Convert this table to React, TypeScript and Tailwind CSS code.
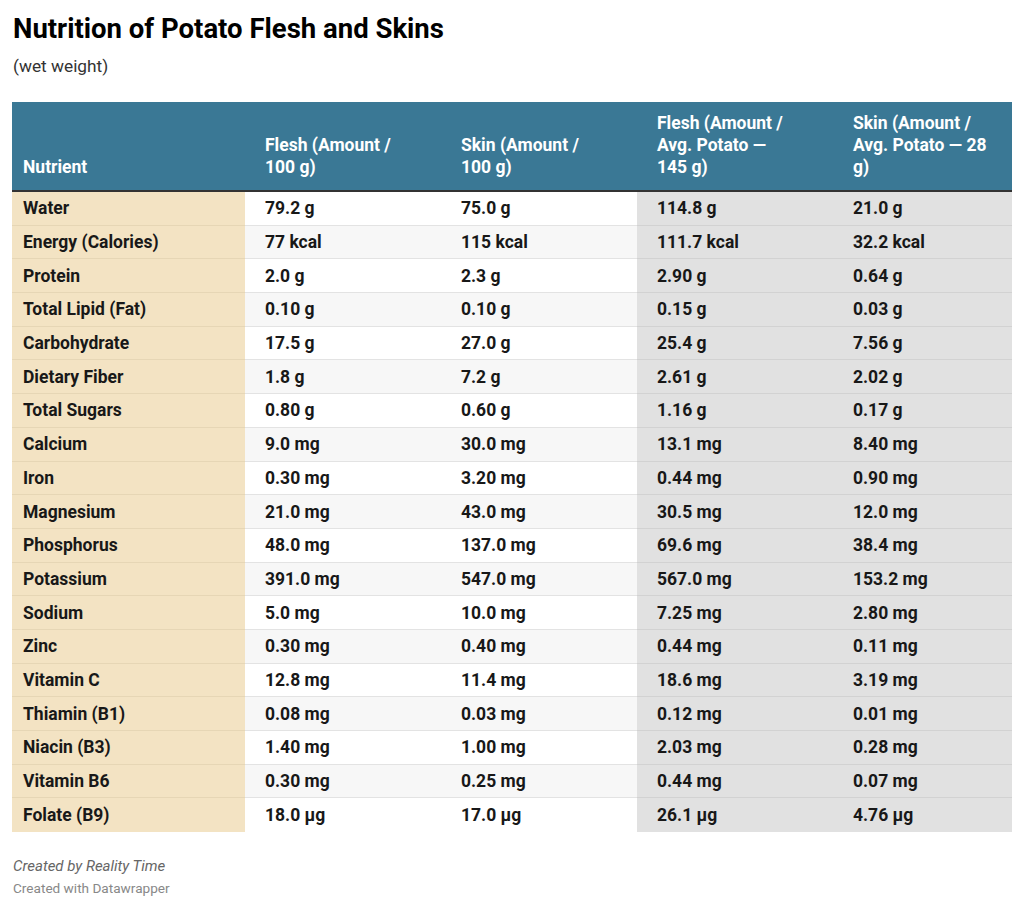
const rows: [string, string, string, string, string][] = [
  ["Water", "79.2 g", "75.0 g", "114.8 g", "21.0 g"],
  ["Energy (Calories)", "77 kcal", "115 kcal", "111.7 kcal", "32.2 kcal"],
  ["Protein", "2.0 g", "2.3 g", "2.90 g", "0.64 g"],
  ["Total Lipid (Fat)", "0.10 g", "0.10 g", "0.15 g", "0.03 g"],
  ["Carbohydrate", "17.5 g", "27.0 g", "25.4 g", "7.56 g"],
  ["Dietary Fiber", "1.8 g", "7.2 g", "2.61 g", "2.02 g"],
  ["Total Sugars", "0.80 g", "0.60 g", "1.16 g", "0.17 g"],
  ["Calcium", "9.0 mg", "30.0 mg", "13.1 mg", "8.40 mg"],
  ["Iron", "0.30 mg", "3.20 mg", "0.44 mg", "0.90 mg"],
  ["Magnesium", "21.0 mg", "43.0 mg", "30.5 mg", "12.0 mg"],
  ["Phosphorus", "48.0 mg", "137.0 mg", "69.6 mg", "38.4 mg"],
  ["Potassium", "391.0 mg", "547.0 mg", "567.0 mg", "153.2 mg"],
  ["Sodium", "5.0 mg", "10.0 mg", "7.25 mg", "2.80 mg"],
  ["Zinc", "0.30 mg", "0.40 mg", "0.44 mg", "0.11 mg"],
  ["Vitamin C", "12.8 mg", "11.4 mg", "18.6 mg", "3.19 mg"],
  ["Thiamin (B1)", "0.08 mg", "0.03 mg", "0.12 mg", "0.01 mg"],
  ["Niacin (B3)", "1.40 mg", "1.00 mg", "2.03 mg", "0.28 mg"],
  ["Vitamin B6", "0.30 mg", "0.25 mg", "0.44 mg", "0.07 mg"],
  ["Folate (B9)", "18.0 µg", "17.0 µg", "26.1 µg", "4.76 µg"],
];

const cols = "grid grid-cols-[233px_196px_196px_196px_179px]";

export default function App() {
  return (
    <div className="min-h-[909px] bg-white px-3 pt-[13px] text-[#181818]" style={{ fontFamily: "Roboto, 'Liberation Sans', sans-serif" }}>
      <h1 className="pl-px text-[27.5px] font-bold leading-[32px] text-black">Nutrition of Potato Flesh and Skins</h1>
      <p className="mt-[10px] pl-px text-[17.3px] leading-[22px] text-[#333]">(wet weight)</p>

      <div className="mt-[25px] w-[1000px]">
        <div className={`${cols} h-[90px] items-end border-b-2 border-[#333] bg-[#3a7895] text-[17.5px] font-bold leading-[22px] text-white`}>
          <div className="pb-[12px] pl-[11px]">Nutrient</div>
          <div className="pb-[12px] pl-5 pr-8">Flesh (Amount / 100 g)</div>
          <div className="pb-[12px] pl-5 pr-8">Skin (Amount / 100 g)</div>
          <div className="pb-[12px] pl-5 pr-10">Flesh (Amount / Avg. Potato — 145 g)</div>
          <div className="pb-[12px] pl-5 pr-2">Skin (Amount / Avg. Potato — 28 g)</div>
        </div>
        {rows.map((r, i) => {
          const last = i === rows.length - 1;
          const stripe = i % 2 === 1 ? "bg-[#f7f7f7]" : "bg-white";
          return (
            <div key={r[0]} className={`${cols} h-[33.7px] text-[17.5px] font-bold leading-[20px]`}>
              <div className={`flex items-center bg-[#f3e3c3] pl-[11px] ${last ? "" : "border-b border-[#e6d6b5]"}`}>{r[0]}</div>
              <div className={`flex items-center pl-5 ${stripe} ${last ? "" : "border-b border-[#e3e3e3]"}`}>{r[1]}</div>
              <div className={`flex items-center pl-5 ${stripe} ${last ? "" : "border-b border-[#e3e3e3]"}`}>{r[2]}</div>
              <div className={`flex items-center bg-[#e1e1e1] pl-5 ${last ? "" : "border-b border-[#d2d2d2]"}`}>{r[3]}</div>
              <div className={`flex items-center bg-[#e1e1e1] pl-5 ${last ? "" : "border-b border-[#d2d2d2]"}`}>{r[4]}</div>
            </div>
          );
        })}
      </div>

      <p className="mt-[25px] pl-px text-[15px] italic leading-[18px] text-[#666]">Created by Reality Time</p>
      <p className="mt-[5px] pl-px text-[13.6px] leading-[16px] text-[#888]">Created with Datawrapper</p>
    </div>
  );
}
